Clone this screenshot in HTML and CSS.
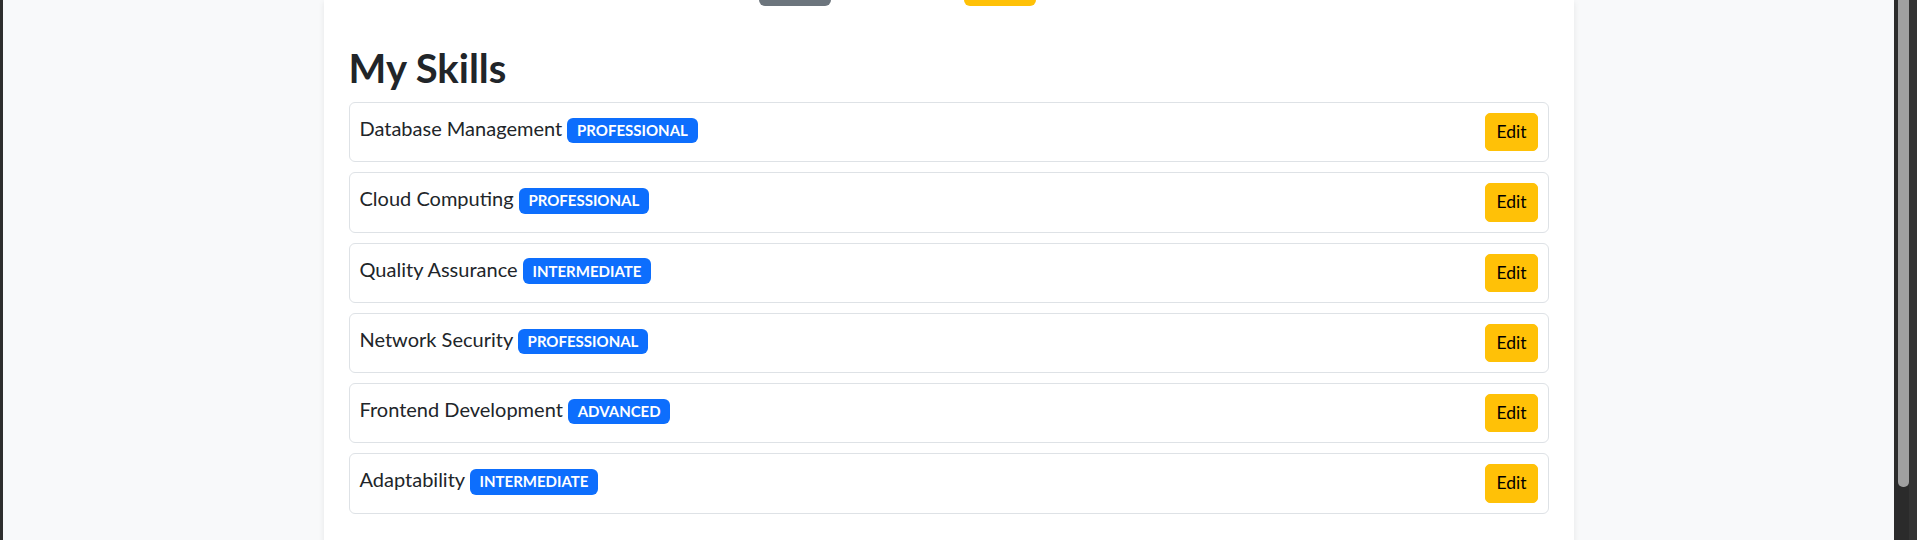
FILE: index.html
```html
<!DOCTYPE html>
<html lang="en">
<head>
<meta charset="utf-8">
<title>My Skills</title>
<link rel="stylesheet" href="styles.css">
</head>
<body>
<div class="window">
  <div class="frame-left"></div>
  <main class="viewport">
    <section class="card">
      <div class="top-actions">
        <button class="btn btn-secondary" aria-label="Back"></button>
        <button class="btn btn-warning" aria-label="Edit profile"></button>
      </div>
      <h2 class="title">My Skills</h2>
      <ul class="skills">
        <li class="skill">
          <span class="skill-name">Database Management <span class="badge">PROFESSIONAL</span></span>
          <button class="btn-edit">Edit</button>
        </li>
        <li class="skill">
          <span class="skill-name">Cloud Computing <span class="badge">PROFESSIONAL</span></span>
          <button class="btn-edit">Edit</button>
        </li>
        <li class="skill">
          <span class="skill-name">Quality Assurance <span class="badge">INTERMEDIATE</span></span>
          <button class="btn-edit">Edit</button>
        </li>
        <li class="skill">
          <span class="skill-name">Network Security <span class="badge">PROFESSIONAL</span></span>
          <button class="btn-edit">Edit</button>
        </li>
        <li class="skill">
          <span class="skill-name">Frontend Development <span class="badge">ADVANCED</span></span>
          <button class="btn-edit">Edit</button>
        </li>
        <li class="skill">
          <span class="skill-name">Adaptability <span class="badge">INTERMEDIATE</span></span>
          <button class="btn-edit">Edit</button>
        </li>
      </ul>
    </section>
  </main>
  <div class="scrollbar"><div class="thumb"></div></div>
  <div class="frame-right"></div>
</div>
</body>
</html>
```

FILE: styles.css
```css
html, body {
  margin: 0;
  height: 100%;
  overflow: hidden;
}

body {
  font-family: Lato, "Noto Sans", sans-serif;
  color: #212529;
  background: #2b2b2b;
}

.window {
  display: flex;
  height: 540px;
}

.frame-left {
  width: 3px;
  background: #2e2e2e;
}

.viewport {
  flex: 1;
  display: flex;
  justify-content: center;
  background: #f8f9fa;
  overflow: hidden;
}

.card {
  width: 1250px;
  box-sizing: border-box;
  padding: 0 25px 40px;
  background: #fff;
  box-shadow: 0 2px 6px rgba(0, 0, 0, 0.08);
  align-self: flex-start;
  min-height: 100%;
}

.top-actions {
  display: flex;
  gap: 133px;
  padding-left: 410px;
  margin-top: -32px;
  height: 38px;
}

.btn {
  width: 72px;
  height: 38px;
  border: 0;
  border-radius: 6px;
  padding: 0;
}

.btn-secondary {
  background: #6c757d;
}

.btn-warning {
  background: #ffc107;
}

.title {
  font-size: 40px;
  font-weight: 700;
  line-height: 48px;
  margin: 38px 0 10px;
}

.skills {
  list-style: none;
  margin: 0;
  padding: 0;
  display: flex;
  flex-direction: column;
  gap: 10px;
}

.skill {
  display: flex;
  justify-content: space-between;
  align-items: flex-start;
  border: 1px solid #dee2e6;
  border-radius: 6px;
  padding: 10px;
}

.skill-name {
  font-size: 20px;
  line-height: 30px;
}

.badge {
  display: inline-block;
  background: #0d6efd;
  color: #fff;
  font-size: 15px;
  font-weight: 700;
  line-height: 1;
  padding: 5.25px 9.75px;
  border-radius: 6px;
  vertical-align: baseline;
}

.btn-edit {
  font-family: inherit;
  font-size: 17.5px;
  line-height: 1.5;
  padding: 5px 10px;
  border: 1px solid #ffc107;
  background: #ffc107;
  color: #000;
  border-radius: 5px;
}

.scrollbar {
  width: 15px;
  background: #2b2b2b;
  display: flex;
  justify-content: flex-end;
}

.thumb {
  width: 11px;
  height: 487px;
  background: #a0a0a0;
  border-radius: 0 0 5px 5px;
}

.frame-right {
  width: 8px;
  background: #333;
}
```
